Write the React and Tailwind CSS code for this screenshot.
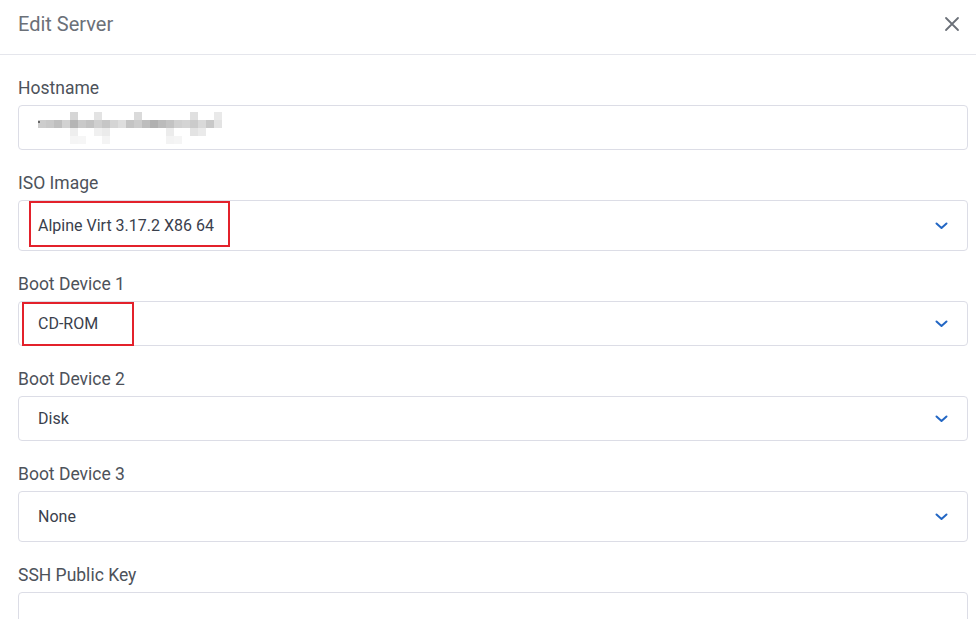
import React from 'react';

const blurRows = [
  ['', '', '', '', 'bg-[#d6d6d6]', '', '', 'bg-[#e3e3e3]', '', '', '', '', 'bg-[#dadada]', '', '', '', '', '', '', 'bg-[#e0e0e0]', '', '', 'bg-[#e9e9e9]'],
  ['bg-[#cdcdcd]', 'bg-[#c9c9c9]', 'bg-[#bfbfbf]', 'bg-[#d2d2d2]', 'bg-[#b5b5b5]', 'bg-[#c9c9c9]', 'bg-[#c2c2c2]', 'bg-[#cfcfcf]', 'bg-[#c6c6c6]', 'bg-[#d5d5d5]', 'bg-[#dedede]', 'bg-[#c4c4c4]', 'bg-[#cccccc]', 'bg-[#bdbdbd]', 'bg-[#b0b0b0]', 'bg-[#bbbbbb]', 'bg-[#c3c3c3]', 'bg-[#d0d0d0]', 'bg-[#d4d4d4]', 'bg-[#cbcbcb]', 'bg-[#d9d9d9]', 'bg-[#c8c8c8]', 'bg-[#e3e3e3]'],
  ['', '', '', '', 'bg-[#eeeeee]', '', '', 'bg-[#f0f0f0]', 'bg-[#ebebeb]', '', '', '', '', '', '', '', 'bg-[#ececec]', '', '', 'bg-[#e3e3e3]', 'bg-[#eaeaea]', '', ''],
  ['', '', '', '', 'bg-[#f5f5f5]', 'bg-[#f6f6f6]', '', '', 'bg-[#f4f4f4]', '', '', '', '', '', '', '', 'bg-[#f3f3f3]', 'bg-[#f5f5f5]', '', '', '', '', ''],
];

const Chevron = () => (
  <svg width="13" height="8" viewBox="0 0 13 8" fill="none" className="shrink-0">
    <path d="M1.5 1.5L6.5 6L11.5 1.5" stroke="#2367c4" strokeWidth="2" strokeLinecap="round" strokeLinejoin="round" />
  </svg>
);

const Label = ({ children }) => (
  <div className="text-[17.5px] leading-[24px] text-[#4d525a] mb-[5px]">{children}</div>
);

const Select = ({ value, h, mark }) => (
  <div className={`relative flex items-center justify-between ${h} pl-[19px] pr-[19px] border border-[#dcdde6] rounded-[4px] bg-white`}>
    <span className="text-[16px] text-[#3a404c]">{value}</span>
    <Chevron />
    {mark}
  </div>
);

export default function App() {
  return (
    <div className="min-h-screen bg-white" style={{ fontFamily: 'Roboto, "Noto Sans", sans-serif' }}>
      {/* Header */}
      <div className="flex items-start justify-between h-[55px] border-b border-[#e5e6ec] pl-[18px] pr-[16px] pt-[10px]">
        <h1 className="text-[20px] leading-[28px] text-[#6b7078]">Edit Server</h1>
        <svg width="16" height="16" viewBox="0 0 16 16" className="mt-[6px]">
          <path d="M2 2L14 14M14 2L2 14" stroke="#6b7078" strokeWidth="1.8" strokeLinecap="round" />
        </svg>
      </div>

      {/* Body */}
      <div className="flex flex-col gap-[21px] pt-[21px] pl-[18px] pr-[8px]">
        <div>
          <Label>Hostname</Label>
          <div className="h-[45px] border border-[#dcdde6] rounded-[4px] flex items-center pl-[19px]">
            <div className="relative">
              <div className="absolute left-0 top-[9px] w-[2px] h-[2px] bg-[#666]" />
              <div className="flex flex-col">
                {blurRows.map((row, r) => (
                  <div key={r} className="flex">
                    {row.map((c, i) => (
                      <div key={i} className={`w-[8px] h-[8px] ${c}`} />
                    ))}
                  </div>
                ))}
              </div>
            </div>
          </div>
        </div>

        <div>
          <Label>ISO Image</Label>
          <Select
            value="Alpine Virt 3.17.2 X86 64"
            h="h-[51px]"
            mark={<div className="absolute left-[10px] top-0 w-[201px] h-[46px] border-2 border-[#e3212b]" />}
          />
        </div>

        <div>
          <Label>Boot Device 1</Label>
          <Select
            value="CD-ROM"
            h="h-[45px]"
            mark={<div className="absolute left-[3px] top-0 w-[112px] h-[44px] border-2 border-[#e3212b]" />}
          />
        </div>

        <div>
          <Label>Boot Device 2</Label>
          <Select value="Disk" h="h-[45px]" />
        </div>

        <div>
          <Label>Boot Device 3</Label>
          <Select value="None" h="h-[51px]" />
        </div>

        <div>
          <Label>SSH Public Key</Label>
          <div className="h-[80px] border border-[#dcdde6] rounded-[4px]" />
        </div>
      </div>
    </div>
  );
}
